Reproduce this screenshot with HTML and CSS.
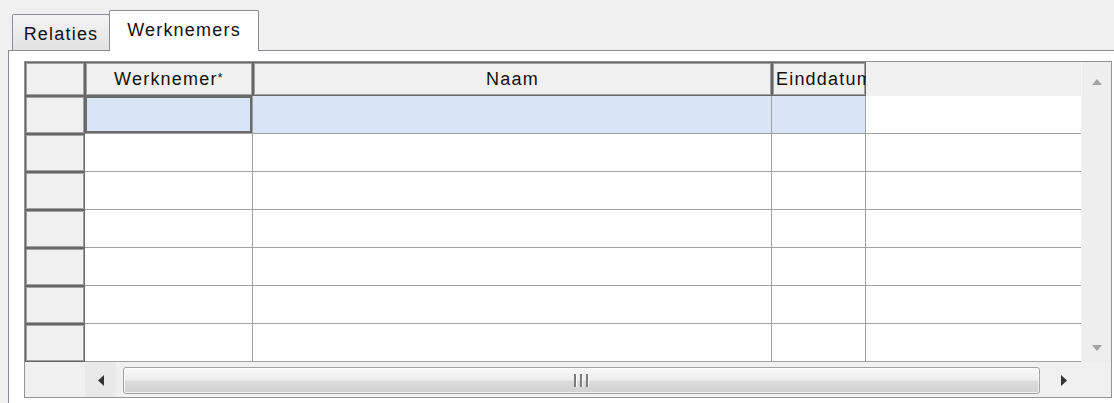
FILE: index.html
```html
<!DOCTYPE html>
<html lang="nl">
<head>
<meta charset="utf-8">
<title>Werknemers</title>
<link rel="stylesheet" href="styles.css">
</head>
<body>
<div class="window">
  <div class="tabstrip">
    <div class="tab">Relaties</div>
    <div class="tab tab-active">Werknemers</div>
  </div>
  <div class="tabpage">
    <div class="datagrid">
      <div class="grid-body">
        <div class="cells">
          <div class="hdr corner"></div>
          <div class="hdr col col-center">Werknemer<span class="req">*</span></div>
          <div class="hdr col col-center">Naam</div>
          <div class="hdr col col-left">Einddatum</div>
          <div class="hdr-fill"></div>

          <div class="hdr rowhdr"></div>
          <div class="cell selected current"></div>
          <div class="cell selected"></div>
          <div class="cell selected"></div>
          <div class="cell fill"></div>

          <div class="hdr rowhdr"></div>
          <div class="cell"></div>
          <div class="cell"></div>
          <div class="cell"></div>
          <div class="cell fill"></div>

          <div class="hdr rowhdr"></div>
          <div class="cell"></div>
          <div class="cell"></div>
          <div class="cell"></div>
          <div class="cell fill"></div>

          <div class="hdr rowhdr"></div>
          <div class="cell"></div>
          <div class="cell"></div>
          <div class="cell"></div>
          <div class="cell fill"></div>

          <div class="hdr rowhdr"></div>
          <div class="cell"></div>
          <div class="cell"></div>
          <div class="cell"></div>
          <div class="cell fill"></div>

          <div class="hdr rowhdr"></div>
          <div class="cell"></div>
          <div class="cell"></div>
          <div class="cell"></div>
          <div class="cell fill"></div>

          <div class="hdr rowhdr"></div>
          <div class="cell"></div>
          <div class="cell"></div>
          <div class="cell"></div>
          <div class="cell fill"></div>
        </div>
        <div class="vscroll">
          <svg class="arrow" width="10" height="6" viewBox="0 0 10 6"><path d="M0 6 L5 0 L10 6 Z" fill="#a3a3a3"/></svg>
          <svg class="arrow" width="10" height="6" viewBox="0 0 10 6"><path d="M0 0 L10 0 L5 6 Z" fill="#a3a3a3"/></svg>
        </div>
      </div>
      <div class="hscroll-row">
        <div class="hs-spacer"></div>
        <div class="hscroll">
          <div class="hs-btn hs-left">
            <svg width="6" height="11" viewBox="0 0 6 11"><path d="M6 0 L0 5.5 L6 11 Z" fill="#333"/></svg>
          </div>
          <div class="hs-thumb">
            <span class="grip"></span><span class="grip"></span><span class="grip"></span>
          </div>
          <div class="hs-btn hs-right">
            <svg width="6" height="11" viewBox="0 0 6 11"><path d="M0 0 L6 5.5 L0 11 Z" fill="#333"/></svg>
          </div>
        </div>
        <div class="hs-corner"></div>
      </div>
    </div>
  </div>
</div>
</body>
</html>
```
FILE: styles.css
```css
html, body {
  margin: 0;
  padding: 0;
  overflow: hidden;
  background: #f0f0f0;
}

body {
  font-family: "Liberation Sans", Arial, sans-serif;
  font-size: 18px;
  letter-spacing: 1.2px;
  color: #111;
}

.window {
  width: 1114px;
  height: 403px;
  overflow: hidden;
  box-sizing: border-box;
  padding: 10px 0 0 8px;
}

/* tab headers */
.tabstrip {
  display: flex;
  align-items: flex-end;
  height: 41px;
  padding-left: 4px;
  margin-bottom: -1px;
  position: relative;
  z-index: 1;
}

.tab {
  box-sizing: border-box;
  width: 98px;
  height: 36px;
  margin-bottom: 1px;
  padding-top: 9px;
  border: 1px solid #898c95;
  border-bottom: none;
  border-radius: 2px 2px 0 0;
  background: linear-gradient(#f4f4f4, #e2e2e2);
  text-align: center;
  line-height: 21px;
  white-space: nowrap;
}

.tab-active {
  width: 150px;
  height: 41px;
  margin-left: -1px;
  margin-bottom: 0;
  padding-top: 9px;
  background: #fff;
}

/* tab page */
.tabpage {
  width: 1120px;
  height: 400px;
  border: 1px solid #898c95;
  background: #fff;
  padding: 10px 0 0 15px;
}

/* data grid */
.datagrid {
  width: 1086px;
  border: 1px solid #939393;
  background: #fff;
}

.grid-body {
  display: flex;
}

.cells {
  width: 1056px;
  display: grid;
  grid-template-columns: 60px 168px 519px 94px 215px;
  grid-template-rows: 34px repeat(7, 38px);
}

.hdr {
  background: #f0f0f0;
  box-shadow: inset 0 0 0 1px #666, inset 0 0 0 2px #a0a0a0;
  display: flex;
  align-items: center;
  overflow: hidden;
  white-space: nowrap;
}

.col-center {
  justify-content: center;
}

.col-left {
  padding-left: 4px;
  box-sizing: border-box;
}

.req {
  font-size: 13px;
  align-self: flex-start;
  margin-top: 8px;
}

.hdr-fill {
  background: #f0f0f0;
}

.cell {
  border-right: 1px solid #a0a0a0;
  border-bottom: 1px solid #a0a0a0;
  background: #fff;
}

.cell.fill {
  border-right: none;
}

.cell.selected {
  background: #d9e5f7;
}

.cell.current {
  box-shadow: inset 0 0 0 2px #6a6a6a;
}

/* vertical scrollbar (disabled) */
.vscroll {
  width: 30px;
  box-sizing: border-box;
  background: #eeeeee;
  border-left: 1px solid #f6f6f6;
  display: flex;
  flex-direction: column;
  justify-content: space-between;
  align-items: center;
  padding: 17px 0 11px;
}

.arrow {
  display: block;
}

/* horizontal scrollbar */
.hscroll-row {
  display: flex;
  height: 35px;
  background: #f0f0f0;
}

.hs-spacer {
  width: 60px;
}

.hscroll {
  width: 996px;
  display: flex;
}

.hs-btn {
  display: flex;
  align-items: center;
  justify-content: center;
  padding-top: 1px;
  box-sizing: border-box;
}

.hs-left {
  width: 31px;
  background: #e9e9e9;
}

.hs-right {
  width: 35px;
}

.hs-thumb {
  flex: 1;
  box-sizing: border-box;
  height: 27px;
  margin: 5px 6px 0 7px;
  border: 1px solid #a2a2a2;
  border-radius: 3px;
  background: linear-gradient(#f7f7f7 0%, #ededed 48%, #dcdcdc 52%, #d2d2d2 100%);
  box-shadow: inset 0 0 0 1px rgba(255, 255, 255, 0.7);
  display: flex;
  justify-content: center;
  align-items: center;
  gap: 3px;
}

.grip {
  width: 2px;
  height: 13px;
  background: #7a7a7a;
  border-right: 1px solid #fbfbfb;
}

.hs-corner {
  width: 30px;
  background: #f0f0f0;
}
```
